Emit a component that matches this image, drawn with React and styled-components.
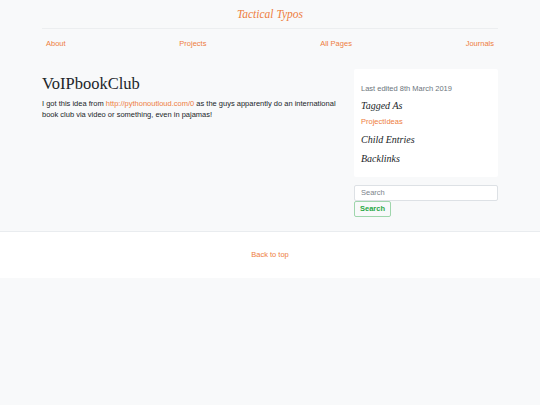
import React from "react";
import styled, { createGlobalStyle } from "styled-components";

const accent = "#ee7d3e";

const GlobalStyle = createGlobalStyle`
  html, body {
    margin: 0;
    padding: 0;
    background: #f8f9fa;
  }
  body {
    font-family: "Liberation Sans", Arial, sans-serif;
    font-size: 7.5px;
    line-height: 1.5;
    color: #212529;
  }
  a {
    color: ${accent};
    text-decoration: none;
  }
`;

const Container = styled.div`
  width: 456px;
  margin: 0 auto;
`;

const Header = styled.header`
  height: 28px;
  display: flex;
  align-items: center;
  justify-content: center;
  border-bottom: 1px solid #eceef0;
`;

const Brand = styled.a`
  font-family: "Liberation Serif", "Times New Roman", serif;
  font-style: italic;
  font-size: 11.5px;
  line-height: 1.25;
`;

const Nav = styled.nav`
  display: flex;
  justify-content: space-between;
  padding: 9px 0 10px;
`;

const NavLink = styled.a`
  padding: 0 4px;
`;

const Main = styled.main`
  display: grid;
  grid-template-columns: 1fr 144px;
  column-gap: 16px;
  margin-top: 10px;
`;

const Article = styled.article``;

const Title = styled.h1`
  font-family: "Liberation Serif", "Times New Roman", serif;
  font-weight: 400;
  font-size: 16.5px;
  line-height: 1.2;
  margin: 4.5px 0 4px;
`;

const Text = styled.p`
  margin: 0;
`;

const Aside = styled.aside`
  display: flex;
  flex-direction: column;
`;

const InfoBox = styled.div`
  background: #ffffff;
  border-radius: 2px;
  padding: 14px 7px 12.5px;
`;

const Muted = styled.p`
  margin: 0 0 5.5px;
  color: #6c757d;
`;

const SideHeading = styled.h4`
  font-family: "Liberation Serif", "Times New Roman", serif;
  font-style: italic;
  font-weight: 400;
  font-size: 10px;
  line-height: 1.2;
  margin: ${(p) => p.$top || 0}px 0 0;
`;

const TagLink = styled.a`
  display: block;
  margin-top: 3.5px;
`;

const SearchForm = styled.form`
  display: flex;
  flex-direction: column;
  align-items: flex-start;
  margin-top: 7.5px;
`;

const SearchInput = styled.input`
  box-sizing: border-box;
  width: 100%;
  height: 16px;
  padding: 0 6px;
  border: 1px solid #dde1e5;
  border-radius: 2px;
  background: #ffffff;
  font-family: inherit;
  font-size: 7.5px;
  color: #495057;
  outline: none;

  &::placeholder {
    color: #7d858c;
  }
`;

const SearchButton = styled.button`
  box-sizing: border-box;
  height: 16px;
  padding: 0 5px;
  border: 1px solid #9fd6ac;
  border-radius: 2px;
  background: transparent;
  color: #28a745;
  font-family: inherit;
  font-size: 7.5px;
  font-weight: 700;
  cursor: pointer;
`;

const Footer = styled.footer`
  margin-top: 14px;
  height: 46px;
  display: flex;
  align-items: center;
  justify-content: center;
  background: #ffffff;
  border-top: 1px solid #e9ecef;
`;

const App = () => {
  return (
    <>
      <GlobalStyle />
      <Container>
        <Header>
          <Brand href="#">Tactical Typos</Brand>
        </Header>
        <Nav>
          <NavLink href="#">About</NavLink>
          <NavLink href="#">Projects</NavLink>
          <NavLink href="#">All Pages</NavLink>
          <NavLink href="#">Journals</NavLink>
        </Nav>
        <Main>
          <Article>
            <Title>VoIPbookClub</Title>
            <Text>
              I got this idea from{" "}
              <a href="#">http://pythonoutloud.com/0</a> as the guys
              apparently do an international book club via video or
              something, even in pajamas!
            </Text>
          </Article>
          <Aside>
            <InfoBox>
              <Muted>Last edited 8th March 2019</Muted>
              <SideHeading>Tagged As</SideHeading>
              <TagLink href="#">ProjectIdeas</TagLink>
              <SideHeading $top={7.5}>Child Entries</SideHeading>
              <SideHeading $top={6.5}>Backlinks</SideHeading>
            </InfoBox>
            <SearchForm onSubmit={(e) => e.preventDefault()}>
              <SearchInput placeholder="Search" />
              <SearchButton type="submit">Search</SearchButton>
            </SearchForm>
          </Aside>
        </Main>
      </Container>
      <Footer>
        <a href="#">Back to top</a>
      </Footer>
    </>
  );
};

export default App;
